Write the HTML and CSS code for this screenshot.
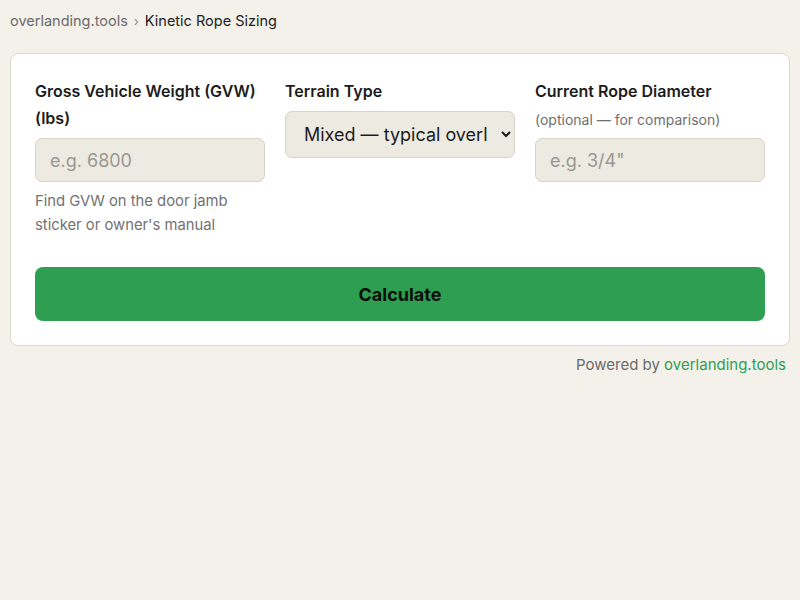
FILE: index.html
```html
<!DOCTYPE html>
<html lang="en">
<head>
<meta charset="utf-8">
<title>Kinetic Rope Sizing</title>
<link rel="stylesheet" href="styles.css">
</head>
<body>
<nav class="crumbs">
  <a class="crumb-link" href="#">overlanding.tools</a>
  <span class="crumb-sep">›</span>
  <span class="crumb-current">Kinetic Rope Sizing</span>
</nav>
<main class="card">
  <div class="fields">
    <div class="field">
      <label class="label" for="gvw">Gross Vehicle Weight (GVW) (lbs)</label>
      <input class="input" id="gvw" type="text" placeholder="e.g. 6800">
      <p class="hint">Find GVW on the door jamb sticker or owner's manual</p>
    </div>
    <div class="field">
      <label class="label" for="terrain">Terrain Type</label>
      <select class="select" id="terrain">
        <option>Mixed — typical overlanding</option>
        <option>Sand</option>
        <option>Mud</option>
      </select>
    </div>
    <div class="field">
      <label class="label label-tight" for="rope">Current Rope Diameter</label>
      <span class="sublabel">(optional — for comparison)</span>
      <input class="input" id="rope" type="text" placeholder="e.g. 3/4&quot;">
    </div>
  </div>
  <button class="btn" type="button">Calculate</button>
</main>
<footer class="powered">Powered by <a class="powered-link" href="#">overlanding.tools</a></footer>
</body>
</html>
```
FILE: styles.css
```css
* { box-sizing: border-box; }
html, body { margin: 0; }
body {
  background: #f4f1eb;
  padding: 10px;
  font-family: Inter, "Liberation Sans", sans-serif;
  color: #1c1c1c;
}
.crumbs {
  display: flex;
  align-items: center;
  gap: 6px;
  font-size: 14.5px;
  line-height: 22px;
  margin-bottom: 21px;
}
.crumb-link { color: #6b6b6b; text-decoration: none; }
.crumb-sep { color: #888; font-size: 13px; }
.crumb-current { color: #222; }
.card {
  background: #fff;
  border: 1px solid #ddd8cc;
  border-radius: 8px;
  padding: 24px;
}
.fields {
  display: grid;
  grid-template-columns: repeat(3, 1fr);
  gap: 20px;
  margin-bottom: 30px;
}
.field { display: flex; flex-direction: column; }
.label {
  font-size: 16px;
  font-weight: 600;
  line-height: 27px;
  margin-bottom: 6px;
  color: #1c1c1c;
}
.label-tight { margin-bottom: 4px; }
.sublabel {
  font-size: 14px;
  line-height: 22px;
  color: #6f6f6f;
  margin-bottom: 7px;
}
.input, .select {
  width: 100%;
  background: #edeae2;
  border: 1px solid #d8d3c8;
  border-radius: 7px;
  font-family: inherit;
  font-size: 18px;
  color: #1c1c1c;
}
.input { height: 44px; padding: 0 14px; }
.input::placeholder { color: #9a978f; }
.select { height: 47px; padding: 0 10px 0 14px; }
.hint {
  margin: 7px 0 0;
  font-size: 14.8px;
  line-height: 24px;
  color: #727272;
}
.btn {
  display: block;
  width: 100%;
  height: 54px;
  background: #2e9e50;
  border: none;
  border-radius: 8px;
  font-family: inherit;
  font-size: 18px;
  font-weight: 700;
  color: #0d0d0d;
}
.powered {
  text-align: right;
  margin-top: 9px;
  padding-right: 4px;
  font-size: 15px;
  line-height: 20px;
  color: #6b6b6b;
}
.powered-link { color: #2e9e50; text-decoration: none; }
```
